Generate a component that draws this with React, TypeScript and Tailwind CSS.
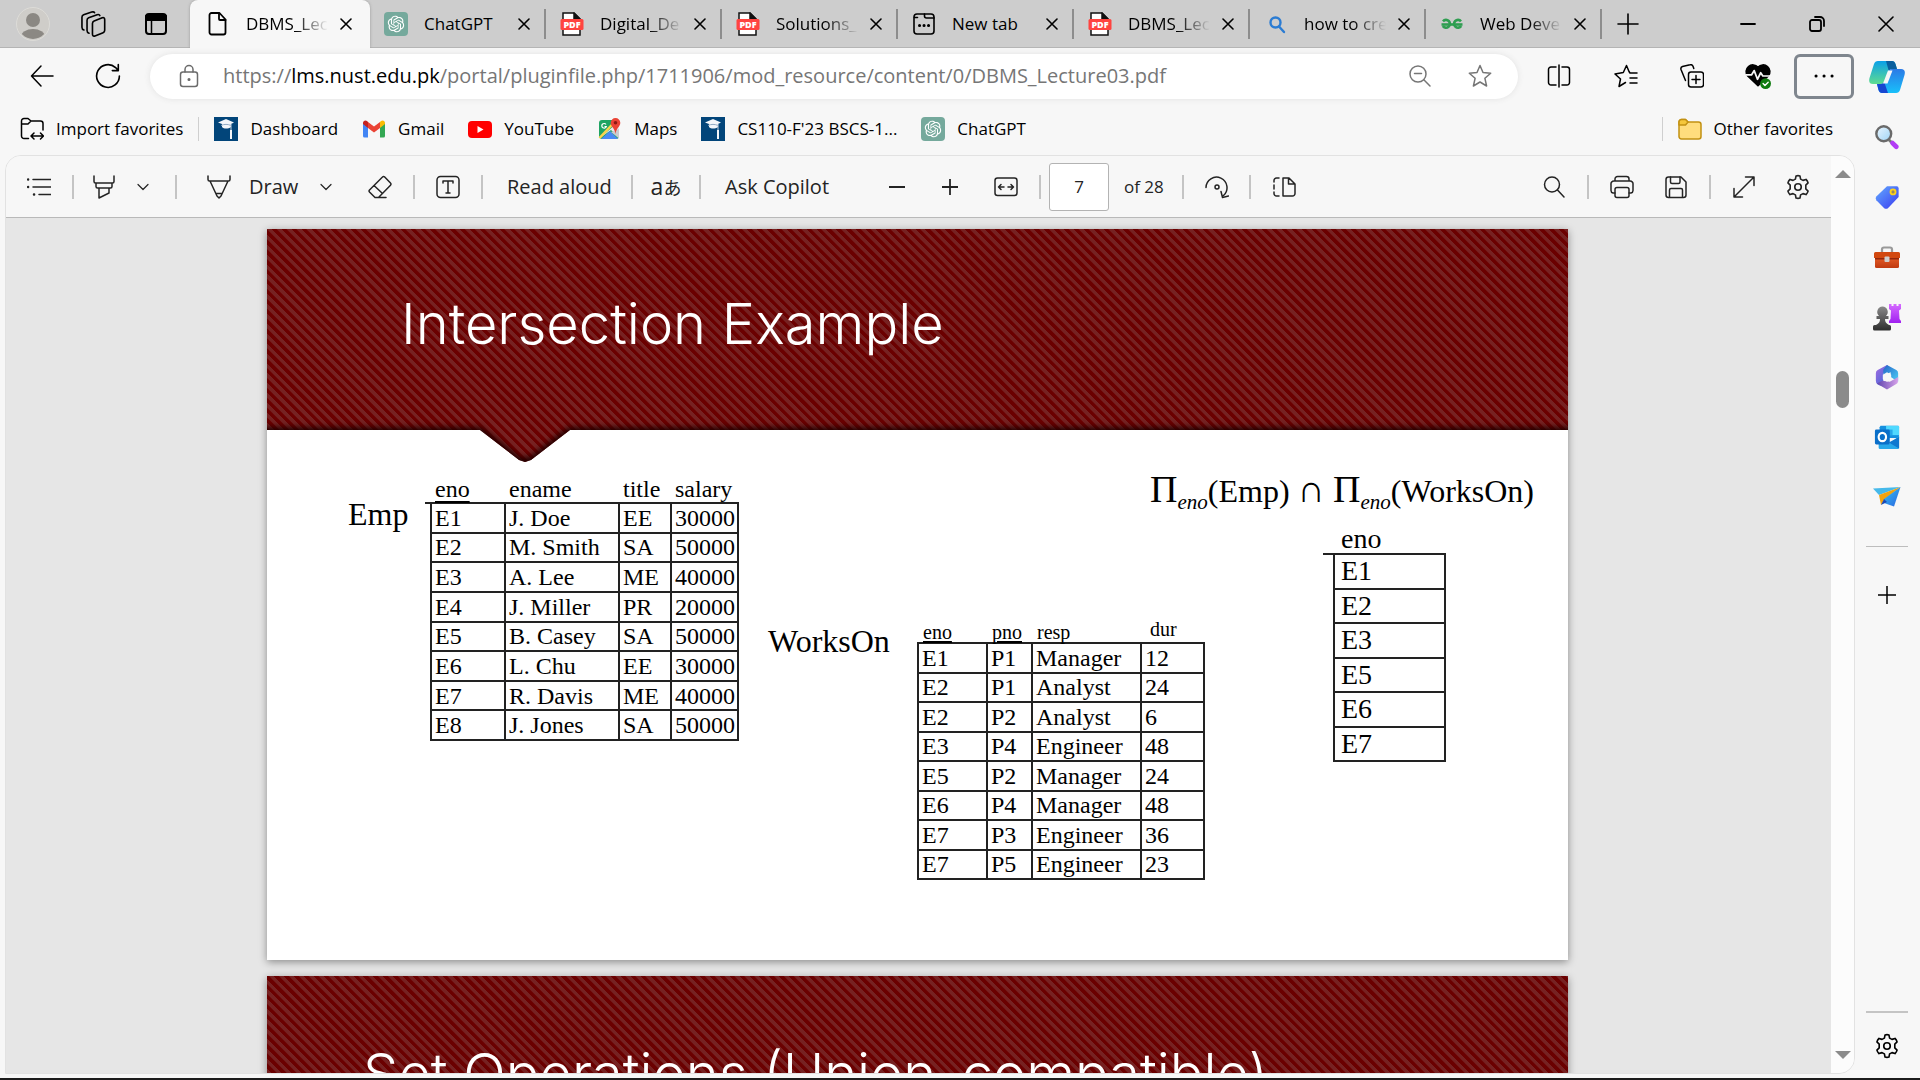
import type { ReactNode } from "react";
import { RiOpenaiFill } from "react-icons/ri";

type IconProps = { children: ReactNode; size?: string; sw?: number; color?: string; box?: string };

function Ico({ children, size = "size-6", sw = 1.5, color = "currentColor", box = "0 0 24 24" }: IconProps) {
  return (
    <svg viewBox={box} className={`${size} shrink-0`} fill="none" stroke={color} strokeWidth={sw} strokeLinecap="round" strokeLinejoin="round" aria-hidden="true">
      {children}
    </svg>
  );
}

const CloseIcon = () => (
  <Ico size="size-3" box="0 0 12 12" sw={1.6}>
    <path d="M1 1l10 10M11 1L1 11" />
  </Ico>
);

const OpenAi = () => (
  <span className="flex size-6 shrink-0 items-center justify-center rounded-[4px] bg-[#75a99c] text-white">
    <RiOpenaiFill className="size-5" />
  </span>
);

const PdfIcon = () => (
  <Ico>
    <path d="M3 1h11l6 6v16H3z" fill="#fff" stroke="#111" strokeLinejoin="miter" />
    <path d="M14 1v6h6z" fill="#111" stroke="#111" />
    <rect x="0.5" y="7" width="23" height="11" rx="1.5" fill="#ff4440" stroke="none" />
    <text x="12" y="16" textAnchor="middle" fontFamily="Open Sans" fontWeight="800" fontSize="9" fill="#fff" stroke="none">PDF</text>
  </Ico>
);

const PageIcon = () => (
  <Ico sw={1.8}>
    <path d="M5.500 1h8l6 6.500V20.500a2 2 0 0 1-2 2h-12a2 2 0 0 1-2-2V3a2 2 0 0 1 2-2z" />
    <path d="M13 1.500V7a1 1 0 0 0 1 1h5.500" />
  </Ico>
);

const NewTabIcon = () => (
  <Ico sw={1.6}>
    <rect x="2" y="2" width="20" height="20" rx="3" />
    <path d="M2.500 5.500h3M12.500 2v2a2 2 0 0 0 2 2H22" />
    <path d="M7.500 13.500h.1M12 13.500h.1M16.500 13.500h.1" strokeWidth={3} />
  </Ico>
);

const GeeksIcon = () => (
  <Ico sw={2.6} color="#2f9e51">
    <path d="M3 9.300A3.900 3.900 0 1 1 2.800 14M21 9.300A3.900 3.900 0 1 0 21.200 14" strokeLinecap="butt" />
    <path d="M1.500 12.500h21" strokeLinecap="butt" />
  </Ico>
);

const GearIcon = () => (
  <Ico size="size-[26px]">
    <circle cx="12" cy="12" r="3" />
    <path d="M10.200 1.800Q12 1.200 13.800 1.800L14.400 4.700L16.600 5.900L19.400 5Q20.800 6.400 21.300 8.200L19.200 10.200V13.800L21.300 15.800Q20.800 17.600 19.400 19L16.600 18.100L14.400 19.300L13.800 22.200Q12 22.800 10.200 22.200L9.600 19.300L7.400 18.100L4.600 19Q3.200 17.600 2.700 15.800L4.800 13.800V10.200L2.700 8.200Q3.200 6.400 4.600 5L7.400 5.900L9.600 4.700Z" />
  </Ico>
);

const ChevronIcon = () => (
  <Ico size="size-3" box="0 0 12 12" sw={1.2}>
    <path d="M1 3.500l5 5 5-5" />
  </Ico>
);

const NustIcon = () => (
  <svg viewBox="0 0 24 24" className="size-6 shrink-0" aria-hidden="true">
    <rect width="24" height="24" fill="#02457a" />
    <path d="M4 5.500L12 2l8 3.500-3 1.500v3c-3 2-7 2-9 0V7z" fill="#f3f6fa" />
    <path d="M7 8.500c3-1.500 7-1.500 10 0" stroke="#8fa9c4" fill="none" />
    <path d="M17 7v6" stroke="#c8d5e3" />
    <path d="M17 13v9" stroke="#f3f6fa" strokeWidth="2" />
  </svg>
);

const GmailIcon = () => (
  <svg viewBox="0 0 24 24" className="size-6 shrink-0" aria-hidden="true">
    <path d="M1 6v13a1.500 1.500 0 0 0 1.500 1.500H6V10z" fill="#4285f4" />
    <path d="M18 10v10.500h3.500A1.500 1.500 0 0 0 23 19V6z" fill="#34a853" />
    <path d="M6 5v6l6 4.500 6-4.500V5l-6 4.500z" fill="#ea4335" />
    <path d="M18 5v6l5-4V6c0-2.500-2.500-3.200-4-2z" fill="#fbbc04" />
    <path d="M6 5v6L1 7V6c0-2.500 2.500-3.200 4-2z" fill="#c5221f" />
  </svg>
);

const YoutubeIcon = () => (
  <svg viewBox="0 0 24 24" className="size-6 shrink-0" aria-hidden="true">
    <rect x="0" y="4" width="24" height="17" rx="4" fill="#f00" />
    <path d="M9.500 9v7l6-3.500z" fill="#fff" />
  </svg>
);

const MapsIcon = () => (
  <svg viewBox="0 0 24 24" className="size-6 shrink-0" aria-hidden="true">
    <rect x="1" y="3" width="20" height="19" rx="3" fill="#1fa463" />
    <path d="M2 21L19 6l2 1v13L13 13z" fill="#e8eaed" />
    <path d="M3 22l9-8 8 8z" fill="#4a8af4" />
    <path d="M1.500 21l16-17" stroke="#fdd44c" strokeWidth="2.500" />
    <path d="M13 15l8 6.500V12z" fill="#c9ccd1" />
    <path d="M17.500 1a4.800 4.800 0 0 0-4.800 4.800c0 4 4 5 4.800 11.200.8-6.200 4.800-7.200 4.800-11.200A4.800 4.800 0 0 0 17.500 1z" fill="#ea4335" />
    <circle cx="17.500" cy="5.800" r="1.800" fill="#8b1a12" />
    <path d="M8 7.500a2.300 2.300 0 1 0 .3 2H6.500" stroke="#fff" fill="none" strokeWidth="1.200" />
  </svg>
);

const FolderIcon = () => (
  <Ico color="#c29112">
    <path d="M1 5a2.500 2.500 0 0 1 2.500-2.500h4L10 5h10.500A2.500 2.500 0 0 1 23 7.500v12a2.500 2.500 0 0 1-2.500 2.500h-17A2.500 2.500 0 0 1 1 19.500z" fill="#ffdd7d" />
    <path d="M1 5a2.500 2.500 0 0 1 2.500-2.500h4L10 5 7.500 8H1z" fill="#f5c73b" />
  </Ico>
);

const tabs: { title: string; icon: ReactNode }[] = [
  { title: "ChatGPT", icon: <OpenAi /> },
  { title: "Digital_De", icon: <PdfIcon /> },
  { title: "Solutions_", icon: <PdfIcon /> },
  { title: "New tab", icon: <NewTabIcon /> },
  { title: "DBMS_Lec", icon: <PdfIcon /> },
  {
    title: "how to cre",
    icon: (
      <Ico sw={2.4} color="#2b7cd3">
        <circle cx="11.500" cy="10.500" r="5" />
        <path d="M15 14.500l5 5.500" />
      </Ico>
    ),
  },
  { title: "Web Deve", icon: <GeeksIcon /> },
];

function TabTitle({ children }: { children: string }) {
  const faded = children.length > 7;
  return (
    <span className={`w-[82px] whitespace-nowrap text-[17px] ${faded ? "[mask-image:linear-gradient(to_right,black_60%,transparent)]" : ""}`}>
      {children}
    </span>
  );
}

function TabBar() {
  return (
    <header className="flex h-12 shrink-0 items-stretch border-b border-[#b4b4b4] bg-[#cdcdcd] text-black">
      <div className="flex w-[190px] shrink-0 items-center">
        <button aria-label="Profile" className="ml-4 flex size-[34px] items-center justify-center rounded-full border border-[#dddcd8] bg-[#cfcdc9]">
          <svg viewBox="0 0 32 32" className="size-8" aria-hidden="true">
            <clipPath id="avatar"><circle cx="16" cy="16" r="15" /></clipPath>
            <g clipPath="url(#avatar)" fill="#8b8883">
              <circle cx="16" cy="12" r="7" />
              <ellipse cx="16" cy="29" rx="12" ry="8" />
            </g>
          </svg>
        </button>
        <button aria-label="Workspaces" className="ml-[30px]">
          <Ico size="size-[26px]">
            <path d="M11.500 11.500Q11.500 9.800 13 9.200L20.500 6.300Q22.800 5.600 22.800 8V17.800Q22.800 19.400 21.300 20L13.800 23Q11.500 23.800 11.500 21.300Z" />
            <path d="M8.300 20.500Q6.500 20 6.500 18V8.500Q6.500 6.900 8 6.300L15.800 3.400Q17.800 2.800 18.300 4.200" />
            <path d="M3.600 17.500Q1.800 17 1.800 15V5.700Q1.800 4.100 3.300 3.500L10.800.9Q12.800.4 13.400 1.600" />
          </Ico>
        </button>
        <button aria-label="Tab actions" className="ml-[38px]">
          <Ico sw={2}>
            <rect x="2" y="2" width="20" height="20" rx="3" />
            <path d="M2 4h20v4H2z" fill="#000" />
            <path d="M7.500 8v14" strokeWidth="1.500" />
          </Ico>
        </button>
      </div>
      <div className="-mb-px flex w-[180px] shrink-0 items-center rounded-t-lg bg-[#f7f7f7] pl-4 shadow-[0_0_3px_#999] [clip-path:inset(0_-4px_0_-4px)]">
        <span className="mr-4"><PageIcon /></span>
        <TabTitle>DBMS_Lec</TabTitle>
        <button aria-label="Close tab" className="ml-3"><CloseIcon /></button>
      </div>
      {tabs.map((t, i) => (
        <div key={i} className="flex w-44 items-center">
          <div className="flex flex-1 items-center pl-[14px]">
            <span className="mr-4">{t.icon}</span>
            <TabTitle>{t.title}</TabTitle>
            <button aria-label="Close tab" className="ml-3"><CloseIcon /></button>
          </div>
          <span className="h-[30px] w-[2px] bg-[#8d8d8d]" />
        </div>
      ))}
      <button aria-label="New tab" className="ml-[14px] flex items-center">
        <Ico sw={1.6}><path d="M12 2v20M2 12h20" /></Ico>
      </button>
      <div className="ml-auto flex items-center">
        <button aria-label="Minimize" className="flex h-full w-[69px] items-center justify-center"><Ico size="size-4" box="0 0 16 16" sw={1.8}><path d="M1 8h14" /></Ico></button>
        <button aria-label="Restore" className="flex h-full w-[69px] items-center justify-center">
          <Ico size="size-4" box="0 0 16 16" sw={1.8}><rect x="1" y="4" width="11" height="11" rx="2" /><path d="M6 1h5a4 4 0 0 1 4 4v5" /></Ico>
        </button>
        <button aria-label="Close" className="flex h-full w-[69px] items-center justify-center"><Ico size="size-4" box="0 0 16 16" sw={1.6}><path d="M1 1l14 14M15 1L1 15" /></Ico></button>
      </div>
    </header>
  );
}

function AddressBar() {
  return (
    <div className="flex h-14 shrink-0 items-center">
      <button aria-label="Back" className="ml-[30px]"><Ico><path d="M23 12H1.500M11 2L1.500 12 11 22" /></Ico></button>
      <button aria-label="Refresh" className="ml-[41px]"><Ico size="size-[26px]"><path d="M22.500 12a10.500 10.500 0 1 1-3.500-7.800L21.500 7M21.500 1.500V7H16" /></Ico></button>
      <div className="ml-[29px] flex h-[45px] flex-1 items-center rounded-full bg-white shadow-[0_0_6px_#e2e2e2]">
        <span className="ml-[27px] text-[#6b6b6b]">
          <Ico><rect x="3.500" y="8" width="17" height="14.500" rx="2.500" /><path d="M8 8V5.500a4 4 0 0 1 8 0V8" /><circle cx="12" cy="15.500" r=".8" fill="#6b6b6b" /></Ico>
        </span>
        <a href="https://lms.nust.edu.pk/portal/pluginfile.php/1711906/mod_resource/content/0/DBMS_Lecture03.pdf" className="ml-[22px] whitespace-nowrap text-[20px] text-[#767676]">
          https://<span className="text-black">lms.nust.edu.pk</span>/portal/pluginfile.php/1711906/mod_resource/content/0/DBMS_Lecture03.pdf
        </a>
        <button aria-label="Zoom" className="ml-auto text-[#767676]"><Ico><circle cx="10" cy="10" r="8" /><path d="M15.800 15.800L22 22M6.500 9.500h7" /></Ico></button>
        <button aria-label="Add to favorites" className="mr-[26px] ml-9 text-[#767676]"><Ico><path d="M12 1.500l3 7 7.700.7-5.800 5.100 1.700 7.700L12 18l-6.600 4 1.700-7.700L1.300 9.200 9 8.500z" /></Ico></button>
      </div>
      <div className="flex items-center">
        <button aria-label="Split screen" className="ml-[29px]"><Ico><path d="M9 3H4a2.500 2.500 0 0 0-2.500 2.500v13A2.500 2.500 0 0 0 4 21h5M15 3h5a2.500 2.500 0 0 1 2.500 2.500v13A2.500 2.500 0 0 1 20 21h-5M12 1v22" /></Ico></button>
        <button aria-label="Favorites" className="ml-[43px]"><Ico><path d="M23 9h-7l-1-1.500L12.500 1.500l-3.200 7L1 10l5.500 5-1.500 7.500 6.500-4M16 14h7M16 19h7" /></Ico></button>
        <button aria-label="Collections" className="ml-[42px]"><Ico><rect x="8.500" y="8" width="15" height="15" rx="2.500" /><path d="M16 11.500v8M12 15.500h8M5.500 16.500L1 5.500a2.500 2.500 0 0 1 1.500-3L10 .8a2.500 2.500 0 0 1 3 1.500l.8 2.200" /></Ico></button>
        <button aria-label="Browser essentials" className="ml-[41px]">
          <Ico size="size-[26px]">
            <path d="M12 21L2.500 12A6 6 0 0 1 12 4a6 6 0 0 1 9.500 8z" fill="#000" />
            <path d="M1 11h5l2.500-4 3 8 3-6 2 3H23" stroke="#f7f7f7" strokeWidth="1.600" />
            <circle cx="19" cy="19" r="5" fill="#107c10" stroke="none" />
            <path d="M16.700 19l1.700 1.700 3-3" stroke="#fff" strokeWidth="1.300" />
          </Ico>
        </button>
        <button aria-label="Settings and more" className="mr-px ml-[23px] flex h-[45px] w-[60px] items-center justify-center rounded-md border-3 border-[#7f868e]">
          <Ico><path d="M4 12h.1M12 12h.1M20 12h.1" strokeWidth="3" /></Ico>
        </button>
      </div>
    </div>
  );
}

const favorites: { label: string; icon: ReactNode }[] = [
  { label: "Dashboard", icon: <NustIcon /> },
  { label: "Gmail", icon: <GmailIcon /> },
  { label: "YouTube", icon: <YoutubeIcon /> },
  { label: "Maps", icon: <MapsIcon /> },
  { label: "CS110-F'23 BSCS-1...", icon: <NustIcon /> },
  { label: "ChatGPT", icon: <OpenAi /> },
];

function FavoritesBar() {
  return (
    <nav className="flex h-[51px] shrink-0 items-center pb-[2px] text-[17px] whitespace-nowrap text-black">
      <button className="ml-5 flex items-center gap-3">
        <Ico>
          <path d="M8.500 21.500H4A2.500 2.500 0 0 1 1.500 19V4A2.500 2.500 0 0 1 4 1.500h4L11 4h9.500A2.500 2.500 0 0 1 23 6.500V13M1.500 7H8l3-3" />
          <path d="M11.500 19h11M14 16l-3 3 3 3M20.500 16l3 3-3 3" />
        </Ico>
        Import favorites
      </button>
      <span className="ml-[15px] h-6 w-px bg-[#cfcfcf]" />
      <div className="ml-[15px] flex items-center gap-6">
        {favorites.map((f) => (
          <a key={f.label} href="#" className="flex items-center gap-3">
            {f.icon}
            {f.label}
          </a>
        ))}
      </div>
      <span className="ml-auto h-6 w-px bg-[#cfcfcf]" />
      <button className="mr-[22px] ml-[15px] flex items-center gap-3">
        <FolderIcon />
        Other favorites
      </button>
    </nav>
  );
}

const Sep = ({ className = "" }: { className?: string }) => <span className={`h-6 w-[2px] shrink-0 bg-[#c4c4c4] ${className}`} />;

function Tool({ label, className, children }: { label: string; className: string; children: ReactNode }) {
  return (
    <button aria-label={label} className={`flex h-10 shrink-0 items-center justify-center ${className}`}>
      {children}
    </button>
  );
}

function PdfToolbar() {
  return (
    <div className="flex h-[62px] shrink-0 items-center border-b border-[#b9b9b9] bg-[#f7f7f7] text-[20px] whitespace-nowrap text-[#242424]">
      <Tool label="Contents" className="w-[66px]"><Ico><path d="M6 4.500h18M6 12h18M12 19.500h12" /><path d="M1 4.500h.1M1 12h.1M7 19.500h.1" strokeWidth="2.500" /></Ico></Tool>
      <Sep />
      <Tool label="Highlight" className="w-[60px]"><Ico><path d="M2 1v5.500A1.500 1.500 0 0 0 3.500 8h17A1.500 1.500 0 0 0 22 6.500V1M4 8v3.500a1.500 1.500 0 0 0 1.500 1.500h13a1.500 1.500 0 0 0 1.500-1.500V8M7 13v10l10-5v-5" /></Ico></Tool>
      <Tool label="Highlight colors" className="w-[18px]"><ChevronIcon /></Tool>
      <Sep className="ml-[23px]" />
      <button className="ml-[30px] flex items-center gap-[18px]">
        <Ico><path d="M1 1v3.500A1.500 1.500 0 0 0 2.500 6h19A1.500 1.500 0 0 0 23 4.500V1M3 6l7 15 2 2 2-2 7-15M9 18.500h6" /></Ico>
        <span className="w-12">Draw</span>
      </button>
      <Tool label="Draw options" className="ml-5 w-[18px]"><ChevronIcon /></Tool>
      <Tool label="Erase" className="ml-3 w-[66px]"><Ico><path d="M14.500 2a1.500 1.500 0 0 1 2.200 0l5.800 6a1.500 1.500 0 0 1 0 2.200L10.500 22.500H7L1.500 17a1.500 1.500 0 0 1 0-2zM6 10.500l8.500 8M9 22.500h9" /></Ico></Tool>
      <Sep />
      <Tool label="Add text" className="w-[66px]"><Ico><rect x="1" y="1.500" width="22" height="21" rx="3.500" /><path d="M7 8V6h10v2M12 6v12M10 18h4" /></Ico></Tool>
      <Sep />
      <button className="ml-6 w-[104px] text-left">Read aloud</button>
      <Sep className="ml-5" />
      <button aria-label="Translate" className="w-[66px] text-center font-['Open_Sans','Noto_Sans_CJK_JP',sans-serif] text-[23px] leading-7"><span>a</span><span className="text-[18px]">あ</span></button>
      <Sep />
      <button className="ml-6 w-[110px] text-left">Ask Copilot</button>
      <Tool label="Zoom out" className="ml-[35px] w-[53px]"><Ico size="size-4" box="0 0 16 16" sw={1.8}><path d="M0 8h16" /></Ico></Tool>
      <Tool label="Zoom in" className="w-[53px]"><Ico size="size-4" box="0 0 16 16" sw={1.8}><path d="M0 8h16M8 0v16" /></Ico></Tool>
      <Tool label="Fit to width" className="w-[60px]"><Ico><rect x="1" y="3" width="22" height="17.500" rx="2.500" /><path d="M10 12H4.500M7 9.500L4.500 12 7 14.500M14 12h5.500M17 9.500l2.500 2.500-2.500 2.500" /></Ico></Tool>
      <Sep className="ml-[3px]" />
      <input aria-label="Page number" defaultValue="7" className="ml-2 h-12 w-[60px] rounded-[3px] border border-[#b3b3b3] bg-white text-center text-[17px]" />
      <span className="ml-[15px] w-[58px] text-[17px]">of 28</span>
      <Sep />
      <Tool label="Rotate" className="w-[65px]"><Ico><path d="M1 12.500a10.500 10.500 0 1 1 17.500 8M16 16.500l1.500 6 6-1.500" /><circle cx="12" cy="12" r="2" /></Ico></Tool>
      <Sep />
      <Tool label="Page view" className="w-[65px]"><Ico><path d="M7 3H4.500A2.500 2.500 0 0 0 2 5.500V7M2 10v4M2 17v1.500A2.500 2.500 0 0 0 4.500 21H7" /><path d="M11 3h6l6 6v9.500a2.500 2.500 0 0 1-2.500 2.500H11zM16.500 3v6H23" /></Ico></Tool>
      <div className="ml-auto flex items-center">
        <Tool label="Find" className="w-[66px]"><Ico><circle cx="10" cy="9.500" r="7.500" /><path d="M15.500 15l6.500 7" /></Ico></Tool>
        <Sep />
        <Tool label="Print" className="w-[66px]"><Ico><path d="M5 6V4a2.500 2.500 0 0 1 2.500-2.500h9A2.500 2.500 0 0 1 19 4v2M5 18H3a2.500 2.500 0 0 1-2-2.500V9.500A3 3 0 0 1 4 6h16a3 3 0 0 1 3 3.500v6A2.500 2.500 0 0 1 21 18h-2" /><rect x="5" y="12.500" width="14" height="10" rx="2" /></Ico></Tool>
        <Tool label="Save" className="w-[42px]"><Ico><path d="M4.500 2h12.500L22 7v13a2.500 2.500 0 0 1-2.500 2.500h-15A2.500 2.500 0 0 1 2 20V4.500A2.500 2.500 0 0 1 4.500 2z" /><path d="M6.500 2v5A1.500 1.500 0 0 0 8 8.500h6.500A1.500 1.500 0 0 0 16 7V2M5.500 22v-7A1.500 1.500 0 0 1 7 13.500h10a1.500 1.500 0 0 1 1.500 1.500v7" /></Ico></Tool>
        <Sep className="ml-3" />
        <Tool label="Full screen" className="w-[66px]"><Ico><path d="M2 22L22 2M13.500 2H22v8.500M2 13.500V22h8.500" /></Ico></Tool>
        <Tool label="PDF settings" className="mr-3 w-[42px]"><GearIcon /></Tool>
      </div>
    </div>
  );
}

function RelationTable({ label, columns, rows, className, cell }: {
  label: string;
  columns: { name: string; className: string; inner: string }[];
  rows: string[][];
  className: string;
  cell: string;
}) {
  return (
    <table aria-label={label} className={`table-fixed border-collapse leading-none ${className}`}>
      <thead>
        <tr className="h-7">
          {columns.map((c) => (
            <th key={c.name} className={`p-0 text-left font-normal ${c.className}`}>
              <span className={c.inner}>{c.name}</span>
            </th>
          ))}
        </tr>
      </thead>
      <tbody>
        {rows.map((r, i) => (
          <tr key={i}>
            {r.map((v, j) => (
              <td key={j} className={`border-2 border-[#222] p-0 ${cell}`}>{v}</td>
            ))}
          </tr>
        ))}
      </tbody>
    </table>
  );
}

const emp = [
  ["E1", "J. Doe", "EE", "30000"],
  ["E2", "M. Smith", "SA", "50000"],
  ["E3", "A. Lee", "ME", "40000"],
  ["E4", "J. Miller", "PR", "20000"],
  ["E5", "B. Casey", "SA", "50000"],
  ["E6", "L. Chu", "EE", "30000"],
  ["E7", "R. Davis", "ME", "40000"],
  ["E8", "J. Jones", "SA", "50000"],
];

const worksOn = [
  ["E1", "P1", "Manager", "12"],
  ["E2", "P1", "Analyst", "24"],
  ["E2", "P2", "Analyst", "6"],
  ["E3", "P4", "Engineer", "48"],
  ["E5", "P2", "Manager", "24"],
  ["E6", "P4", "Manager", "48"],
  ["E7", "P3", "Engineer", "36"],
  ["E7", "P5", "Engineer", "23"],
];

const stripes = "bg-[repeating-linear-gradient(45deg,#6b0000_0px,#6b0000_3px,#762222_4px,#762222_7px)]";

function Projection({ of }: { of: string }) {
  return (
    <span className="flex items-baseline">
      <span className="text-[38px]">Π</span>
      <sub className="relative bottom-auto top-[7px] text-[21px] italic">eno</sub>
      <span>({of})</span>
    </span>
  );
}

function Slide({ children }: { children: ReactNode }) {
  return <section className="relative h-[731px] w-full max-w-[1301px] shrink-0 bg-white shadow-[0_2px_8px_rgba(0,0,0,0.4)]">{children}</section>;
}

function Slides() {
  return (
    <main className="flex min-h-0 flex-1 flex-col items-center gap-4 overflow-hidden bg-[#e6e6e6] pt-[11px] pr-[2px] font-['Liberation_Serif',serif] text-[24px] text-black">
      <Slide>
        <div className={`relative -mb-8 flex h-[233px] items-start pt-[60px] pl-[134px] [clip-path:polygon(0_0,100%_0,100%_201px,303px_201px,264px_231px,258px_233px,252px_231px,213px_201px,0_201px)] ${stripes}`}>
          <svg className="absolute inset-0 size-full" aria-hidden="true">
            <path d="M-20 203H213L252 233H264L303 203H1340" fill="none" stroke="#1c0000" strokeWidth="9" className="blur-[3px]" />
          </svg>
          <h1 className="relative font-['Inter'] text-[56px] leading-[70px] font-light whitespace-nowrap text-white">Intersection Example</h1>
        </div>
        <div className="flex items-start">
          <span className="mt-16 ml-[81px] w-[82px] shrink-0 text-[32px] leading-10">Emp</span>
          <RelationTable
            label="Emp"
            className="mt-[45px] h-[266px] w-[307px] shrink-0"
            cell="pl-[3px]"
            columns={[
              { name: "eno", className: "relative w-[74px] pl-1 before:absolute before:bottom-[-2px] before:left-[-6px] before:h-[2px] before:w-[7px] before:bg-[#222] before:content-['']", inner: "underline underline-offset-4" },
              { name: "ename", className: "w-[114px] pl-1", inner: "" },
              { name: "title", className: "w-[52px] pl-1", inner: "" },
              { name: "salary", className: "w-[67px] pl-1", inner: "" },
            ]}
            rows={emp}
          />
          <span className="mt-[191px] ml-[29px] w-[149px] shrink-0 text-[32px] leading-10">WorksOn</span>
          <RelationTable
            label="WorksOn"
            className="mt-[185px] h-[265px] w-[286px] shrink-0"
            cell="pl-[3px]"
            columns={[
              { name: "eno", className: "w-[69px] pl-[5px] align-bottom text-[20px]", inner: "underline underline-offset-2" },
              { name: "pno", className: "w-[45px] pl-[5px] align-bottom text-[20px]", inner: "underline underline-offset-2" },
              { name: "resp", className: "w-[109px] pl-[5px] align-bottom text-[20px]", inner: "" },
              { name: "dur", className: "w-[63px] pl-[9px] text-[20px]", inner: "" },
            ]}
            rows={worksOn}
          />
          <div className="flex min-w-0 flex-1 flex-col items-end pr-[34px]">
            <div className="mt-[33px] flex h-[62px] items-baseline gap-2 text-[32px] leading-[52px] whitespace-nowrap">
              <Projection of="Emp" />
              <span className="text-[38px]">∩</span>
              <Projection of="WorksOn" />
            </div>
            <RelationTable
              label="Result"
              className="mr-[88px] h-[237px] w-[111px] text-[28px]"
              cell="pl-[6px]"
              columns={[
                { name: "eno", className: "relative w-[111px] pl-[7px] before:absolute before:bottom-[-2px] before:left-[-11px] before:h-[2px] before:w-[12px] before:bg-[#222] before:content-['']", inner: "" },
              ]}
              rows={[["E1"], ["E2"], ["E3"], ["E5"], ["E6"], ["E7"]]}
            />
          </div>
        </div>
      </Slide>
      <Slide>
        <div className={`h-[201px] pt-[63px] pl-[96px] ${stripes}`}>
          <h1 className="font-['Inter'] text-[56px] leading-[70px] font-light whitespace-nowrap text-white">Set Operations (Union-compatible)</h1>
        </div>
      </Slide>
    </main>
  );
}

function Scrollbar() {
  return (
    <div className="flex w-[23px] shrink-0 flex-col items-center bg-[#fcfcfc] pt-[14px] pb-[14px]" aria-hidden="true">
      <svg viewBox="0 0 16 8" className="h-2 w-4 shrink-0"><path d="M0 8L8 0l8 8z" fill="#8b8b8b" /></svg>
      <span className="mt-[193px] h-[37px] w-[13px] shrink-0 rounded-full bg-[#8b8b8b]" />
      <svg viewBox="0 0 16 8" className="mt-auto h-2 w-4 shrink-0"><path d="M0 0l8 8 8-8z" fill="#8b8b8b" /></svg>
    </div>
  );
}

function SideIcon({ children, size = "size-[26px]" }: { children: ReactNode; size?: string }) {
  return <svg viewBox="0 0 28 28" className={size} aria-hidden="true">{children}</svg>;
}

function Gradient({ id, from, to, x2 = "1", y2 = "1" }: { id: string; from: string; to: string; x2?: string; y2?: string }) {
  return (
    <linearGradient id={id} x1="0" y1="0" x2={x2} y2={y2}>
      <stop stopColor={from} />
      <stop offset="1" stopColor={to} />
    </linearGradient>
  );
}

const sideItems: { label: string; icon: ReactNode }[] = [
  {
    label: "Search",
    icon: (
      <SideIcon>
        <Gradient id="lens" from="#eaf6ff" to="#9fd4f5" />
        <path d="M16 17l4 4" stroke="#777" strokeWidth="3" />
        <path d="M20 20.500l4 4" stroke="#b23cf5" strokeWidth="5" strokeLinecap="round" />
        <circle cx="10.500" cy="10.500" r="8" fill="url(#lens)" stroke="#6a6a6a" strokeWidth="2.600" />
      </SideIcon>
    ),
  },
  {
    label: "Shopping",
    icon: (
      <SideIcon>
        <Gradient id="tag" from="#62abff" to="#3a3af0" />
        <path d="M14 2.500h10.500a2 2 0 0 1 2 2V14L15 26q-2 1.500-4 0L2.500 17.500q-1.500-2 0-4z" fill="url(#tag)" />
        <circle cx="20.500" cy="8.500" r="2.700" fill="#9c8a5a" stroke="#ffd21c" strokeWidth="2" />
      </SideIcon>
    ),
  },
  {
    label: "Tools",
    icon: (
      <SideIcon size="size-7">
        <Gradient id="box" from="#e8602a" to="#c03a10" x2="0" />
        <path d="M9 9V6.500A2 2 0 0 1 11 4.500h6A2 2 0 0 1 19 6.500V9" fill="none" stroke="#9a9a9a" strokeWidth="2.200" />
        <rect x="2" y="13" width="24" height="12" rx="1.500" fill="url(#box)" />
        <path d="M1 10.500A1.500 1.500 0 0 1 2.500 9h23a1.500 1.500 0 0 1 1.500 1.500V15H1z" fill="#d2480f" />
        <path d="M2 15h24v1.500H2z" fill="#93260a" />
        <rect x="11.500" y="13.500" width="5" height="5.500" rx="1" fill="#cfcfcf" />
      </SideIcon>
    ),
  },
  {
    label: "Games",
    icon: (
      <SideIcon size="size-7">
        <Gradient id="rook" from="#d56bff" to="#a020f0" x2="0" />
        <Gradient id="pawn" from="#8a8a8a" to="#2e2e2e" x2="0" />
        <path d="M16 1h2.500v2h2V1h3v2h2V1H28v5l-2 1.500L26.500 16l1.500 2v2H16v-2l1.500-2L18 7.500 16 6z" fill="url(#rook)" />
        <path d="M9.500 3.500A5.500 5.500 0 0 0 6 13H3.500v3H7c0 3-1 4.500-4 6H1.500A1.500 1.500 0 0 0 0 23.500V26a1.500 1.500 0 0 0 1.500 1.500h15A1.500 1.500 0 0 0 18 26v-2.500a1.500 1.500 0 0 0-1.500-1.500H16c-3-1.500-4-3-4-6h3.500v-3H13A5.500 5.500 0 0 0 9.500 3.500z" fill="url(#pawn)" />
      </SideIcon>
    ),
  },
  {
    label: "Microsoft 365",
    icon: (
      <SideIcon>
        <Gradient id="m1" from="#a86be0" to="#2d66d8" />
        <Gradient id="m2" from="#2463c8" to="#4fd0f5" />
        <Gradient id="m3" from="#5f45ad" to="#d7a2ea" x2="1" y2="0" />
        <path d="M14 1L4 6.500Q2 7.500 2 10v8q0 3 2 4l3 1.500 3-5V10l8-5z" fill="url(#m1)" />
        <path d="M14 1l10 5.500q2 1 2 3.500v9l-8-5V9l-8 3V6z" fill="url(#m2)" />
        <path d="M14 27.500l10-6q2-1 2-4V14l-9 5-8-1-6 3z" fill="url(#m3)" />
        <path d="M14 9l4.500 2.500v5L14 19l-4.500-2.500v-5z" fill="#f7f7f7" />
      </SideIcon>
    ),
  },
  {
    label: "Outlook",
    icon: (
      <SideIcon>
        <path d="M7 2h18.500A1.500 1.500 0 0 1 27 3.500V15H6V3.500z" fill="#1490df" />
        <path d="M13 2h14v10H13z" fill="#50d9ff" />
        <path d="M13 6h7v6h-7z" fill="#28a8ea" />
        <path d="M27 13v12.500a1.500 1.500 0 0 1-1.500 1.500H6.500A1.500 1.500 0 0 1 5 25.500V14l12 7z" fill="#28a8ea" />
        <path d="M27 14v12.500L16 20z" fill="#0f78d0" />
        <rect x="1" y="6" width="16" height="16" rx="1.500" fill="#0a6fc9" />
        <ellipse cx="9" cy="14" rx="4" ry="4.500" fill="none" stroke="#fff" strokeWidth="2.300" />
      </SideIcon>
    ),
  },
  {
    label: "Drop",
    icon: (
      <SideIcon size="size-7">
        <Gradient id="plane" from="#33c4f3" to="#2a62e0" />
        <path d="M27.500 4L0 5.500 6 12z" fill="#46b9ea" />
        <path d="M27.500 4L6 12l2 10 3-5z" fill="#f2a30f" />
        <path d="M27.500 4L11 16v4l10 3.500z" fill="url(#plane)" />
        <path d="M8 22l3-6 3 3z" fill="#1b49b8" />
      </SideIcon>
    ),
  },
];

function Sidebar() {
  return (
    <aside className="flex w-[65px] shrink-0 flex-col items-center pr-[2px] pb-[13px]">
      <button aria-label="Copilot" className="flex h-[59px] w-full shrink-0 items-center justify-center pb-[2px]">
        <svg viewBox="0 0 36 32" className="h-8 w-9" aria-hidden="true">
          <Gradient id="c1" from="#0aa0e8" to="#5fdc90" x2="0" />
          <Gradient id="c2" from="#2b7ae6" to="#18c0fa" x2="0" />
          <path d="M9 0h14q2.500 0 3.500 3l1.500 5h-5q-3 0-4 3l-3 9q-1 3-4 3H4Q-1 23 .5 17L5 3q1-3 4-3z" fill="url(#c1)" />
          <path d="M17 0h6q2.500 0 3.500 3l1.500 5h-5q-2 0-3.200 2z" fill="#0a5f9e" />
          <path d="M27 32H13q-2.500 0-3.500-3L8 23h4q3 0 4-3l3-9q1-3 4-3h9q5 0 3.500 6L31 29q-1 3-4 3z" fill="url(#c2)" />
          <path d="M19 32h-6q-2.500 0-3.500-3L8 23h4q2 0 3.200-2z" fill="#1747d1" />
          <path d="M19 9.500h4.500l-5 13H14z" fill="#f7f7f7" />
        </svg>
      </button>
      {sideItems.map((s) => (
        <button key={s.label} aria-label={s.label} className="flex h-[60px] w-full shrink-0 items-center justify-center">{s.icon}</button>
      ))}
      <span className="mt-[19px] h-px w-[42px] shrink-0 bg-[#bdbdbd]" />
      <button aria-label="Customize" className="mt-[39px]"><Ico size="size-[18px]" box="0 0 18 18"><path d="M9 0v18M0 9h18" /></Ico></button>
      <span className="mt-auto mb-5 h-[2px] w-[42px] shrink-0 bg-[#c4c4c4]" />
      <button aria-label="Settings" className="mb-[6px]"><GearIcon /></button>
    </aside>
  );
}

export default function App() {
  return (
    <div className="flex h-screen flex-col overflow-hidden border-b-2 border-[#1c1c1c] bg-[#f7f7f7] font-['Open_Sans',sans-serif]">
      <TabBar />
      <div className="flex min-h-0 flex-1">
        <div className="flex min-w-0 flex-1 flex-col">
          <AddressBar />
          <FavoritesBar />
          <div className="mb-1 ml-[5px] flex min-h-0 flex-1 overflow-hidden rounded-[16px_16px_16px_0] border border-[#e2e2e2]">
            <div className="flex min-w-0 flex-1 flex-col">
              <PdfToolbar />
              <Slides />
            </div>
            <Scrollbar />
          </div>
        </div>
        <Sidebar />
      </div>
    </div>
  );
}
